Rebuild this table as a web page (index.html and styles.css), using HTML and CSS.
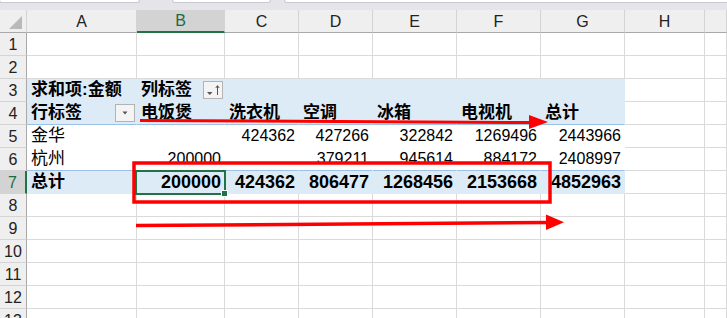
FILE: index.html
```html
<!DOCTYPE html>
<html lang="zh-CN">
<head>
<meta charset="utf-8">
<title>数据透视表</title>
<link rel="stylesheet" href="styles.css">
</head>
<body>
<div class="page">
  <div class="topbar">
    <div class="tb tb1"></div>
    <div class="tb tb2"></div>
    <div class="tb tb3"></div>
  </div>
  <div class="sheet">
    <div class="row hdr">
      <div class="corner"><svg width="26" height="22" viewBox="0 0 26 22"><polygon points="22,6 22,19 9,19" fill="#b9b9b9"/></svg></div>
      <div class="ch">A</div><div class="ch sel">B</div><div class="ch">C</div><div class="ch">D</div><div class="ch">E</div><div class="ch">F</div><div class="ch">G</div><div class="ch">H</div><div class="ch last"></div>
    </div>
    <div class="row">
      <div class="rh">1</div><div class="c"></div><div class="c"></div><div class="c"></div><div class="c"></div><div class="c"></div><div class="c"></div><div class="c"></div><div class="c"></div><div class="c"></div>
    </div>
    <div class="row">
      <div class="rh">2</div><div class="c"></div><div class="c"></div><div class="c"></div><div class="c"></div><div class="c"></div><div class="c"></div><div class="c"></div><div class="c"></div><div class="c"></div>
    </div>
    <div class="row">
      <div class="rh">3</div>
      <div class="c pv b">求和项:金额</div>
      <div class="c pv b">列标签<span class="fbtn"><svg width="20" height="18" viewBox="0 0 20 18"><polygon points="4,11 9.5,11 6.75,14" fill="#555"/><path d="M14.5 14V5" stroke="#555" stroke-width="1" fill="none"/><path d="M12.8 7 L14.5 4.6 L16.2 7" stroke="#555" stroke-width="1" fill="none"/></svg></span></div>
      <div class="c pv"></div><div class="c pv"></div><div class="c pv"></div><div class="c pv"></div><div class="c pv"></div>
      <div class="c"></div><div class="c"></div>
    </div>
    <div class="row">
      <div class="rh">4</div>
      <div class="c pv pl b">行标签<span class="fbtn"><svg width="20" height="18" viewBox="0 0 20 18"><polygon points="7.5,7.5 12.5,7.5 10,10.5" fill="#555"/></svg></span></div>
      <div class="c pv pl b">电饭煲</div><div class="c pv pl b">洗衣机</div><div class="c pv pl b">空调</div><div class="c pv pl b">冰箱</div><div class="c pv pl b">电视机</div><div class="c pv pl b">总计</div>
      <div class="c"></div><div class="c"></div>
    </div>
    <div class="row">
      <div class="rh">5</div>
      <div class="c pw">金华</div><div class="c pw n"></div><div class="c pw n">424362</div><div class="c pw n">427266</div><div class="c pw n">322842</div><div class="c pw n">1269496</div><div class="c pw n">2443966</div>
      <div class="c"></div><div class="c"></div>
    </div>
    <div class="row">
      <div class="rh">6</div>
      <div class="c pw pl">杭州</div><div class="c pw pl n">200000</div><div class="c pw pl n"></div><div class="c pw pl n">379211</div><div class="c pw pl n">945614</div><div class="c pw pl n">884172</div><div class="c pw pl n">2408997</div>
      <div class="c"></div><div class="c"></div>
    </div>
    <div class="row">
      <div class="rh rsel">7</div>
      <div class="c pv pe b">总计</div><div class="c pv pe n nb cur">200000</div><div class="c pv pe n nb">424362</div><div class="c pv pe n nb">806477</div><div class="c pv pe n nb">1268456</div><div class="c pv pe n nb">2153668</div><div class="c pv pe n nb">4852963</div>
      <div class="c"></div><div class="c"></div>
    </div>
    <div class="row">
      <div class="rh">8</div><div class="c"></div><div class="c"></div><div class="c"></div><div class="c"></div><div class="c"></div><div class="c"></div><div class="c"></div><div class="c"></div><div class="c"></div>
    </div>
    <div class="row">
      <div class="rh">9</div><div class="c"></div><div class="c"></div><div class="c"></div><div class="c"></div><div class="c"></div><div class="c"></div><div class="c"></div><div class="c"></div><div class="c"></div>
    </div>
    <div class="row">
      <div class="rh">10</div><div class="c"></div><div class="c"></div><div class="c"></div><div class="c"></div><div class="c"></div><div class="c"></div><div class="c"></div><div class="c"></div><div class="c"></div>
    </div>
    <div class="row">
      <div class="rh">11</div><div class="c"></div><div class="c"></div><div class="c"></div><div class="c"></div><div class="c"></div><div class="c"></div><div class="c"></div><div class="c"></div><div class="c"></div>
    </div>
    <div class="row">
      <div class="rh">12</div><div class="c"></div><div class="c"></div><div class="c"></div><div class="c"></div><div class="c"></div><div class="c"></div><div class="c"></div><div class="c"></div><div class="c"></div>
    </div>
    <div class="row">
      <div class="rh">13</div><div class="c"></div><div class="c"></div><div class="c"></div><div class="c"></div><div class="c"></div><div class="c"></div><div class="c"></div><div class="c"></div><div class="c"></div>
    </div>
  </div>
  <svg class="marks" width="727" height="318" viewBox="0 0 727 318">
    <line x1="140" y1="120.5" x2="531" y2="122.5" stroke="#ff0000" stroke-width="3"/>
    <polygon points="529,115 548,122 529,129" fill="#ff0000"/>
    <rect x="134" y="163" width="416" height="39" fill="none" stroke="#ff0000" stroke-width="3.5"/>
    <line x1="136" y1="225.5" x2="548" y2="222.5" stroke="#ff0000" stroke-width="3.5"/>
    <polygon points="546,214.5 564,222.3 546,230" fill="#ff0000"/>
  </svg>
</div>
</body>
</html>
```
FILE: styles.css
```css
html, body {
  margin: 0;
  padding: 0;
  background: #ffffff;
}
.page {
  position: relative;
  width: 727px;
  height: 318px;
  overflow: hidden;
  font-family: "Liberation Sans", "Noto Sans CJK SC", sans-serif;
  color: #000;
}
.topbar {
  height: 10px;
  background: #e4e4e9;
  display: flex;
  align-items: flex-start;
}
.tb {
  height: 3px;
  background: #ffffff;
  border: 1px solid #c9c9cf;
  border-top: none;
  border-radius: 0 0 3px 3px;
  box-sizing: border-box;
}
.tb1 { width: 141px; margin-left: -1px; }
.tb2 { width: 99px; margin-left: 32px; }
.tb3 { flex: 1; margin-left: 13px; margin-right: -2px; }

.row {
  display: grid;
  grid-template-columns: 27px 110px 88px 74px 74px 84px 84px 84px 80px 1fr;
  height: 23px;
}
.row > div {
  box-sizing: border-box;
  border-right: 1px solid #dadada;
  border-bottom: 1px solid #dadada;
}
.hdr > div {
  background: #efefef;
  border-right: 1px solid #d4d4d4;
  border-bottom: 1px solid #a9a9a9;
}
.ch {
  display: flex;
  align-items: center;
  justify-content: center;
  font-size: 16px;
  color: #222;
  padding-top: 1px;
}
.ch.sel {
  background: #d3d3d3 !important;
  color: #1d6b40;
  border-bottom: 2px solid #217346 !important;
}
.corner {
  position: relative;
}
.corner svg { display: block; }
.row > .rh {
  background: #efefef;
  border-right: 1px solid #a9a9a9;
  border-bottom: 1px solid #d4d4d4;
  display: flex;
  align-items: center;
  justify-content: center;
  font-size: 16px;
  color: #222;
  padding-top: 2px;
}
.row > .rh.rsel {
  background: #d3d3d3;
  color: #1d6b40;
  border-right: 2px solid #217346;
}
.c {
  display: flex;
  align-items: flex-end;
  padding: 0 4px 1px 4px;
  font-size: 17px;
  line-height: 20px;
  white-space: nowrap;
  overflow: visible;
}
.row > .pv {
  background: #ddebf7;
  border-right-color: #ddebf7;
  border-bottom-color: #ddebf7;
}
.row > .pw {
  background: #ffffff;
  border-right-color: #ffffff;
  border-bottom-color: #ffffff;
}
.row > .pl {
  border-bottom-color: #9bc2e6;
}
.row > .pe {
  border-bottom-color: #ddebf7;
}
.b {
  font-weight: 600;
}
.n {
  justify-content: flex-end;
  font-size: 16px;
  padding-right: 3px;
}
.nb {
  font-weight: 700;
  font-size: 18px;
  padding-right: 3px;
}
.fbtn {
  margin-left: auto;
  align-self: center;
  width: 20px;
  height: 18px;
  box-sizing: border-box;
  border: 1px solid #b3b3b3;
  background: #f4f4f4;
  display: flex;
  margin-right: -3px;
  margin-top: 1px;
}
.fbtn svg {
  display: block;
  margin: -1px;
}
.cur {
  position: relative;
}
.cur::after {
  content: "";
  position: absolute;
  left: -2px;
  top: -1px;
  width: 91px;
  height: 25px;
  border: 2px solid #217346;
  box-sizing: border-box;
}
.cur::before {
  content: "";
  position: absolute;
  left: 84px;
  top: 19px;
  width: 7px;
  height: 7px;
  background: #217346;
  border: 1px solid #ffffff;
  box-sizing: border-box;
  z-index: 1;
}
.marks {
  position: absolute;
  left: 0;
  top: 0;
  pointer-events: none;
}
```
